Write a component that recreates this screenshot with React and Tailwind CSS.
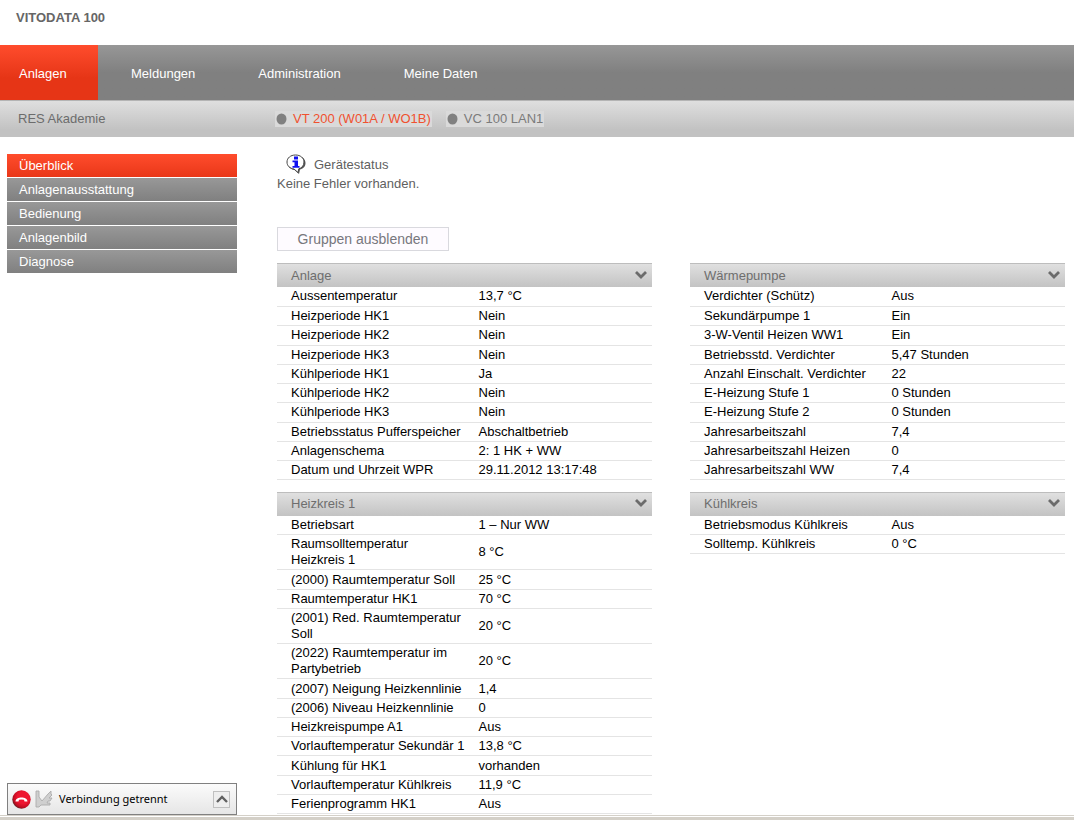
import { useState } from "react";

const NAV = [
  { label: "Anlagen", active: true, cls: "w-[98px]" },
  { label: "Meldungen", cls: "ml-3.5" },
  { label: "Administration", cls: "ml-[25px]" },
  { label: "Meine Daten", cls: "ml-[25px]" },
];

const SIDE = ["Überblick", "Anlagenausstattung", "Bedienung", "Anlagenbild", "Diagnose"];

const LEFT = [
  {
    title: "Anlage",
    rows: [
      ["Aussentemperatur", "13,7 °C"],
      ["Heizperiode HK1", "Nein"],
      ["Heizperiode HK2", "Nein"],
      ["Heizperiode HK3", "Nein"],
      ["Kühlperiode HK1", "Ja"],
      ["Kühlperiode HK2", "Nein"],
      ["Kühlperiode HK3", "Nein"],
      ["Betriebsstatus Pufferspeicher", "Abschaltbetrieb"],
      ["Anlagenschema", "2: 1 HK + WW"],
      ["Datum und Uhrzeit WPR", "29.11.2012 13:17:48"],
    ],
  },
  {
    title: "Heizkreis 1",
    rows: [
      ["Betriebsart", "1 – Nur WW"],
      ["Raumsolltemperatur Heizkreis 1", "8 °C"],
      ["(2000) Raumtemperatur Soll", "25 °C"],
      ["Raumtemperatur HK1", "70 °C"],
      ["(2001) Red. Raumtemperatur Soll", "20 °C"],
      ["(2022) Raumtemperatur im Partybetrieb", "20 °C"],
      ["(2007) Neigung Heizkennlinie", "1,4"],
      ["(2006) Niveau Heizkennlinie", "0"],
      ["Heizkreispumpe A1", "Aus"],
      ["Vorlauftemperatur Sekundär 1", "13,8 °C"],
      ["Kühlung für HK1", "vorhanden"],
      ["Vorlauftemperatur Kühlkreis", "11,9 °C"],
      ["Ferienprogramm HK1", "Aus"],
    ],
  },
];

const RIGHT = [
  {
    title: "Wärmepumpe",
    rows: [
      ["Verdichter (Schütz)", "Aus"],
      ["Sekundärpumpe 1", "Ein"],
      ["3-W-Ventil Heizen WW1", "Ein"],
      ["Betriebsstd. Verdichter", "5,47 Stunden"],
      ["Anzahl Einschalt. Verdichter", "22"],
      ["E-Heizung Stufe 1", "0 Stunden"],
      ["E-Heizung Stufe 2", "0 Stunden"],
      ["Jahresarbeitszahl", "7,4"],
      ["Jahresarbeitszahl Heizen", "0"],
      ["Jahresarbeitszahl WW", "7,4"],
    ],
  },
  {
    title: "Kühlkreis",
    rows: [
      ["Betriebsmodus Kühlkreis", "Aus"],
      ["Solltemp. Kühlkreis", "0 °C"],
    ],
  },
];

function Group({ title, rows, open }) {
  const [shown, setShown] = useState(true);
  return (
    <section>
      <h2>
        <button
          type="button"
          aria-expanded={shown}
          onClick={() => setShown(!shown)}
          className="flex h-6 w-full items-center justify-between border-t border-[#bdbdbd] bg-linear-to-b from-[#e0e0e0] to-[#c3c3c3] pr-1 pl-3.5 text-[13px] text-[#6e6e6e]"
        >
          {title}
          <svg className="mb-0.5" width="14" height="10" viewBox="0 0 14 10" fill="none" stroke="#6b6b6b" strokeWidth="2.8" aria-hidden="true">
            <path d="M2 2 L7 7 L12 2" />
          </svg>
        </button>
      </h2>
      {open && shown && (
        <table className="w-full table-fixed border-collapse text-[13px] leading-4 text-black">
          <tbody>
            {rows.map(([label, value]) => (
              <tr key={label} className="h-[19px] border-b border-[#e4e4e4] nth-[4n+3]:h-5">
                <th scope="row" className="w-1/2 py-px pl-3.5 text-left font-normal">{label}</th>
                <td className="py-px pl-3.5">{value}</td>
              </tr>
            ))}
          </tbody>
        </table>
      )}
    </section>
  );
}

function Device({ label, active }) {
  return (
    <a
      href="#"
      className={`flex h-4 items-center gap-1.5 bg-[#dadada] px-px text-[13px] leading-4 ${active ? "text-[#f0512f]" : "text-[#7b7b7b]"}`}
    >
      <svg width="11" height="12" viewBox="0 0 11 12" aria-hidden="true">
        <ellipse cx="5.5" cy="6" rx="5" ry="5.5" fill="#808080" />
      </svg>
      {label}
    </a>
  );
}

export default function App() {
  const [open, setOpen] = useState(true);
  return (
    <div className="flex min-h-screen flex-col bg-white font-['Liberation_Sans',Arial,sans-serif]">
      <header>
        <h1 className="h-[45px] px-4 pt-2 text-[13px] leading-5 font-bold text-[#666]">VITODATA 100</h1>
        <nav className="flex h-[55px] bg-linear-to-b from-[#979797] to-[#808080] to-50% text-[13px] text-white">
          {NAV.map((n) => (
            <a
              key={n.label}
              href="#"
              className={`flex items-center px-[19px] pt-0.5 ${n.cls} ${n.active ? "bg-linear-to-b from-[#ff4c2c] to-[#e63516] to-60%" : ""}`}
            >
              {n.label}
            </a>
          ))}
        </nav>
        <div className="flex h-[37px] items-center border-t border-[#b4b4b4] bg-linear-to-b from-[#dfdfdf] to-[#c2c2c2] to-80% pb-px">
          <span className="w-[275px] pl-[18px] text-[13px] text-[#6c6c6c]">RES Akademie</span>
          <div className="flex gap-3.5">
            <Device label="VT 200 (W01A / WO1B)" active />
            <Device label="VC 100 LAN1" />
          </div>
        </div>
      </header>

      <div className="flex flex-1 gap-10 pr-[9px] pl-[7px]">
        <aside className="flex w-[230px] shrink-0 flex-col pt-[17px]">
          <nav className="flex flex-col gap-px text-[13px] text-white">
            {SIDE.map((s, i) => (
              <a
                key={s}
                href="#"
                className={`flex h-[23px] items-center bg-linear-to-b pl-3 ${i === 0 ? "from-[#ff4c2c] to-[#e93718]" : "from-[#989898] to-[#808080]"}`}
              >
                {s}
              </a>
            ))}
          </nav>
          <div className="mt-auto flex h-8 items-center border border-[#808080] bg-linear-to-b from-[#fbfbfb] to-[#e6e6e6] pr-1.5 pl-1 font-['Noto_Sans',Tahoma,sans-serif] text-[11px] text-black">
            <svg width="19" height="19" viewBox="0 0 19 19" aria-hidden="true">
              <defs>
                <radialGradient id="hangup" cx="0.6" cy="0.4" r="0.65">
                  <stop offset="0.5" stopColor="#ee1630" />
                  <stop offset="0.8" stopColor="#c40c22" />
                  <stop offset="1" stopColor="#5a2020" />
                </radialGradient>
              </defs>
              <circle cx="9.5" cy="9.5" r="9.2" fill="url(#hangup)" />
              <path d="M3.5 11.5 C3.5 6 15.5 6 15.5 11.5 L12.5 11.5 L12 9.8 Q9.5 9 7 9.8 L6.5 11.5Z" fill="#fff" />
            </svg>
            <svg className="ml-1" width="18" height="18" viewBox="0 0 18 18" aria-hidden="true">
              <path d="M1 1 H4 V7 L7 11 L13 4 L16 1 V4 L17 5 L14 8 H17 L15 11 H13 L12 13 H15 V15 H6 L4 17 H1Z" fill="#cfcfcf" stroke="#acacac" strokeWidth="0.9" />
            </svg>
            <span className="ml-1.5">Verbindung getrennt</span>
            <button type="button" aria-label="Verbindung anzeigen" className="ml-auto flex h-[17px] w-[17px] items-center justify-center border border-[#c0c0c0] bg-[#eee]">
              <svg width="12" height="8" viewBox="0 0 12 8" fill="none" stroke="#606060" strokeWidth="2.4" aria-hidden="true">
                <path d="M1 7 L6 2 L11 7" />
              </svg>
            </button>
          </div>
        </aside>

        <main className="min-w-0 flex-1 pt-[17px]">
          <div className="text-[13px] leading-[19px] text-[#5f5f5f]">
            <h2 className="flex h-5 items-center gap-2 pl-[9px]">
              <svg width="20" height="20" viewBox="0 0 20 20" aria-hidden="true">
                <path d="M11 2 C16 2 19.5 5 19.5 9 C19.5 13 16.5 15 14 15.5 L13 20 L8.5 16 C4 15.5 2 12 2 9Z" fill="#555" />
                <path d="M9.5 1 C14.5 1 18 4 18 8 C18 12 15.5 14 12.8 14.8 L12 18.5 L8 15 C4 14.5 1 12 1 8 C1 4 4.5 1 9.5 1Z" fill="#fff" stroke="#444" />
                <path d="M8 2.5h4v3h-4z M6.5 6.5h5.5v5.5h1.5v1.8h-7v-1.8h2v-3.7h-2z" fill="#1010f0" />
              </svg>
              Gerätestatus
            </h2>
            <p>Keine Fehler vorhanden.</p>
          </div>
          <button
            type="button"
            onClick={() => setOpen(!open)}
            className="mt-[34px] flex h-6 w-[172px] items-center justify-center border border-[#d9d9de] bg-[#fefbff] text-sm text-[#77777d]"
          >
            Gruppen ausblenden
          </button>
          <div className="mt-3 grid grid-cols-2 items-start gap-[38px]">
            <div className="flex flex-col gap-3">
              {LEFT.map((g) => <Group key={g.title} {...g} open={open} />)}
            </div>
            <div className="flex flex-col gap-3">
              {RIGHT.map((g) => <Group key={g.title} {...g} open={open} />)}
            </div>
          </div>
        </main>
      </div>
      <footer className="h-[5px] border-t border-[#d4d0c8] bg-[#d4d0c8]">
        <div className="h-px bg-white" />
      </footer>
    </div>
  );
}
